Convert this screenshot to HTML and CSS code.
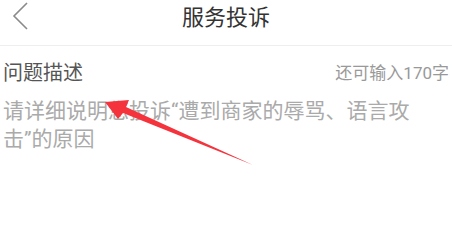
FILE: index.html
```html
<!DOCTYPE html>
<html lang="zh-CN">
<head>
    <meta charset="UTF-8">
    <meta name="viewport" content="width=device-width, initial-scale=1.0">
    <title>服务投诉</title>
    <link rel="stylesheet" href="styles.css">
</head>
<body>
    <div class="page">
        <header class="topbar">
            <span class="back">
                <svg width="18" height="28" viewBox="0 0 18 28">
                    <polyline points="15,1 2,14 15,27" fill="none" stroke="#8a8a8a" stroke-width="1.6"/>
                </svg>
            </span>
            <h1 class="title">服务投诉</h1>
        </header>

        <section class="complaint">
            <div class="complaint-head">
                <span class="label">问题描述</span>
                <span class="counter">还可输入170字</span>
            </div>
            <p class="hint">请详细说明您投诉“遭到商家的辱骂、语言攻击”的原因</p>
        </section>

        <svg class="arrow" width="452" height="246" viewBox="0 0 452 246">
            <polygon points="105,102 129,100 126,107 253,165 123,113 118,119" fill="#f4333c"/>
        </svg>
    </div>
</body>
</html>
```

FILE: styles.css
```css
body {
    margin: 0;
    background: #fff;
    font-family: Roboto, "Noto Sans CJK SC", sans-serif;
}

.page {
    position: relative;
    width: 452px;
    height: 246px;
    overflow: hidden;
}

.topbar {
    position: relative;
    height: 45px;
    border-bottom: 1px solid #eeeeee;
    display: flex;
    justify-content: center;
}

.back {
    position: absolute;
    left: 12px;
    top: 2px;
}

.title {
    margin: 0;
    font-size: 22px;
    font-weight: normal;
    line-height: 36px;
    color: #333;
}

.complaint {
    padding: 0 3px;
}

.complaint-head {
    margin-top: 14px;
    display: flex;
    justify-content: space-between;
    align-items: center;
    line-height: 26px;
}

.label {
    font-size: 20px;
    color: #555;
}

.counter {
    font-size: 17px;
    color: #999;
}

.hint {
    margin: 11px 0 0;
    font-size: 21px;
    line-height: 28px;
    color: #aaa;
    width: 420px;
}

.arrow {
    position: absolute;
    left: 0;
    top: 0;
}
```
